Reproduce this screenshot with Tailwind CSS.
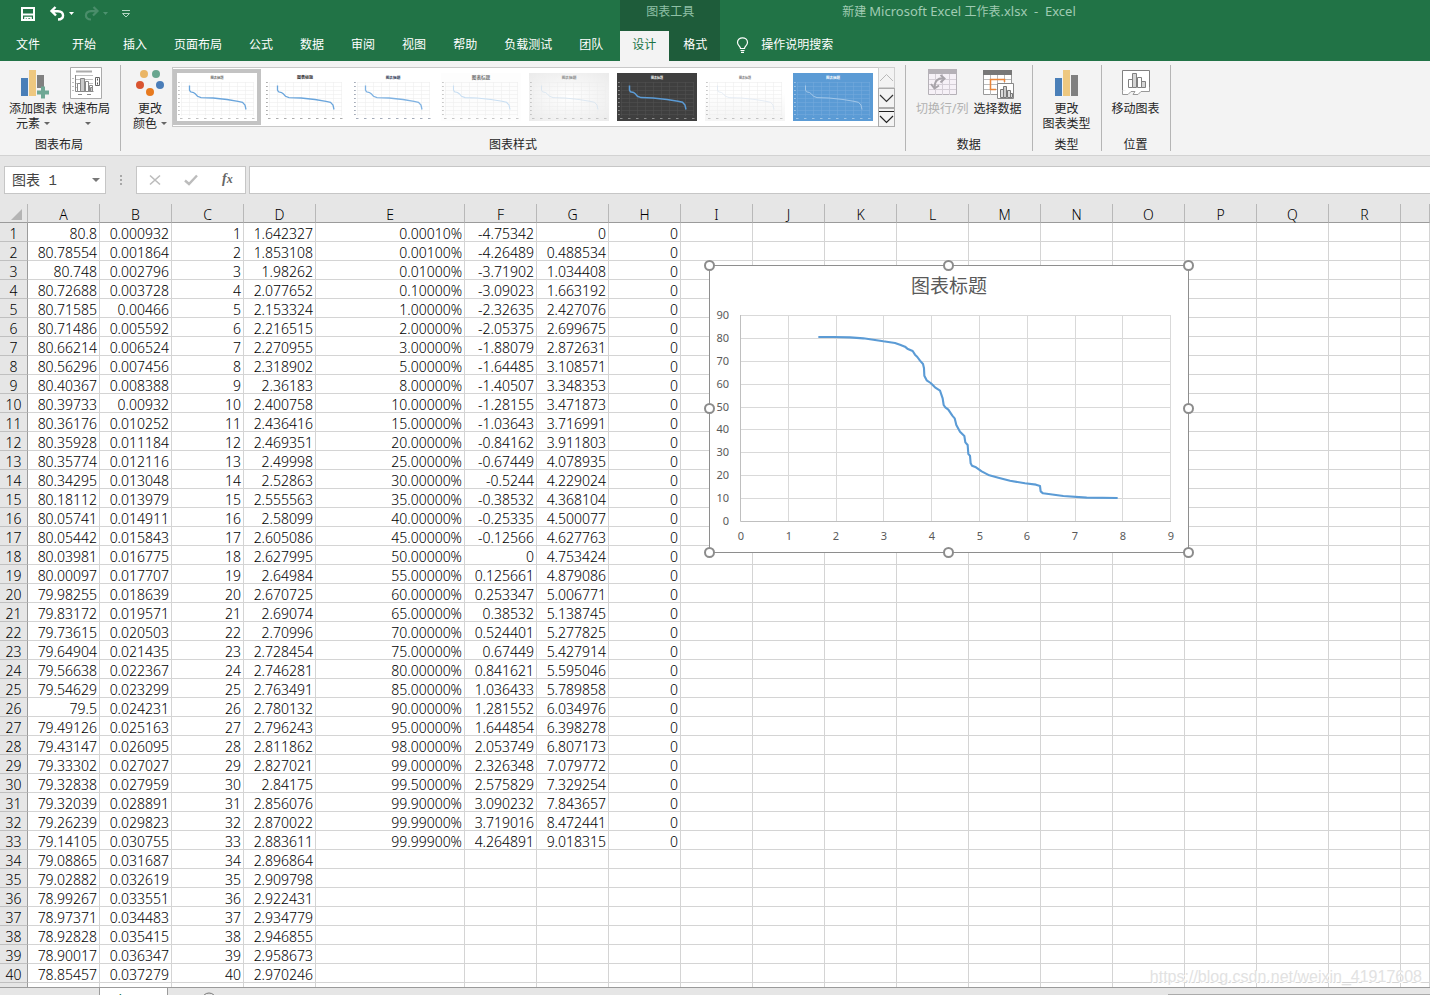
<!DOCTYPE html>
<html lang="zh-CN">
<head>
<meta charset="utf-8">
<title>新建 Microsoft Excel 工作表.xlsx - Excel</title>
<script src="https://cdn.jsdelivr.net/npm/@tailwindcss/browser@4"></script>
</head>
<body class="flex h-screen flex-col overflow-hidden bg-[#e6e6e6] font-['Noto_Sans','Noto_Sans_CJK_SC',sans-serif] text-xs text-[#262626]">

<!-- Title bar and ribbon tabs -->
<header class="flex shrink-0 bg-[#217346] text-white">
  <div class="flex flex-col">
    <div class="flex h-[31px] items-center pb-1 pl-5">
      <button aria-label="保存" class="h-4 w-4"><svg class="h-4 w-4" viewBox="0 0 16 16" fill="none" stroke="#fff" stroke-width="2"><path d="M2 2H14V14H2Z"/><path d="M3 8.500H13"/><path d="M5 14V11.500H11V14M7.500 12V14.500" stroke-width="1.600"/></svg></button>
      <button aria-label="撤消" class="ml-[13px] h-4 w-4"><svg class="h-4 w-4" viewBox="0 0 16 16" fill="none" stroke="#fff" stroke-width="2.400"><path d="M6.500 1L2.500 5L7 9.500M2.500 5.200H9C15.500 5.500 16 13.500 9 13.500"/></svg></button>
      <button aria-label="撤消选项" class="ml-1 h-4 w-2"><svg class="h-4 w-2" viewBox="0 0 8 16"><path d="M0 6H5L2.500 9Z" fill="#fff"/></svg></button>
      <button aria-label="恢复" class="ml-[7px] h-4 w-4"><svg class="h-4 w-4" viewBox="0 0 16 16" fill="none" stroke="#4a8d6a" stroke-width="2.200"><path d="M9.500 1L13.500 5L9 9.500M13.500 5.200H7C0.500 5.500 0 13.500 7 13.500"/></svg></button>
      <button aria-label="恢复选项" class="ml-[3px] h-4 w-2"><svg class="h-4 w-2" viewBox="0 0 8 16"><path d="M0 6H5L2.500 9Z" fill="#4e9270"/></svg></button>
      <button aria-label="自定义快速访问工具栏" class="ml-[10px] h-4 w-3"><svg class="h-4 w-3" viewBox="0 0 12 16" fill="none" stroke="#b5d5c3"><path d="M1 4.500H9"/><path d="M1.500 7.500H8.500L5 11Z"/></svg></button>
    </div>
    <nav aria-label="功能区" class="flex h-[30px] gap-px pb-0.5 pr-1">
      <button class="mr-[5px] pl-4 pr-[13px]">文件</button>
      <button class="px-[13px]">开始</button>
      <button class="px-[13px]">插入</button>
      <button class="px-[13px]">页面布局</button>
      <button class="px-[13px]">公式</button>
      <button class="px-[13px]">数据</button>
      <button class="px-[13px]">审阅</button>
      <button class="px-[13px]">视图</button>
      <button class="px-[13px]">帮助</button>
      <button class="px-[13px]">负载测试</button>
      <button class="px-[13px]">团队</button>
    </nav>
  </div>
  <div class="flex flex-col bg-[#1e5c3a]">
    <div class="flex h-[31px] items-center justify-center pb-2 text-[#8fc0a6]">图表工具</div>
    <div class="flex h-[30px]">
      <button class="bg-[#f3f3f3] pb-0.5 pl-3 pr-[13px] text-[#217346]">设计</button>
      <button class="pb-0.5 pl-[14px] pr-[13px]">格式</button>
    </div>
  </div>
  <div class="flex flex-1 flex-col">
    <div class="flex h-[31px] items-center whitespace-pre pb-2 pl-[122px] text-[#a0cbb3]"><span>新建 <span class="text-[13px]">Microsoft Excel </span>工作表<span class="text-[13px]">.xlsx  -  Excel</span></span></div>
    <button class="flex h-[30px] items-center gap-3 pb-0.5 pl-4 text-left">
      <svg class="h-4 w-[13px]" viewBox="0 0 13 16" fill="none" stroke="#fff" stroke-width="1.200"><path d="M4.500 11.500C4.500 9 1.500 8.500 1.500 5.500C1.500 2.500 4 0.800 6.500 0.800S11.500 2.500 11.500 5.500C11.500 8.500 8.500 9 8.500 11.500Z"/><path d="M4.500 13.500H8.500M5 15.400H8"/></svg>
      操作说明搜索
    </button>
  </div>
</header>

<!-- Ribbon -->
<section aria-label="设计" class="flex h-[95px] shrink-0 border-b border-[#d2d2d2] bg-[#f3f3f3] py-1 leading-[15px]">
  <div class="flex flex-col border-r border-[#b5b5b5] pt-0.5">
    <div class="flex flex-1 items-start gap-[5px] pl-[9px] pr-2.5">
      <button class="flex flex-col items-center">
        <svg class="mb-0.5 h-8 w-8" viewBox="0 0 32 32"><path fill="#4a7fb8" d="M4 11h7v18H4z"/><path fill="#eec880" d="M12 3h7v26h-7z"/><path fill="#808080" d="M20 8h7v13h-7z"/><path fill="#6fa895" d="M24 19.500h4v4h4v4h-4v4h-4v-4h-4v-4h4z"/></svg>
        添加图表
        <span class="flex items-center gap-1">元素<svg class="h-[5px] w-[6px]" viewBox="0 0 6 5"><path d="M0 1H6L3 4Z" fill="#666"/></svg></span>
      </button>
      <button class="flex flex-col items-center">
        <svg class="mb-0.5 h-8 w-8" viewBox="0 0 32 32" fill="none" stroke="#888"><path d="M.5.5h31v31H.5z" fill="#fff" stroke="#ababab"/><path d="M6 4.500h16" stroke="#ababab" stroke-width="2"/><path d="M5 8.500h18M5 12.500h18M5 16.500h18M5 20.500h18M2 11.500h2M2 15.500h2M2 19.500h2M2 23.500h2" stroke="#c0c0c0"/><path d="M5.500 8v16.500h18"/><path d="M7.500 16.500h3v8h-3zM15.500 14.500h3v10h-3zM19.500 18.500h3v6h-3z" fill="#fff"/><path d="M10.500 11.500h4v13h-4zM22.500 20.500h-2v4h2z" fill="#ccc"/><path d="M25.500 10.500h4v8h-4z" stroke="#666"/><path d="M27 12.500h1M27 16.500h1" stroke="#555" stroke-width="2"/><path d="M8 27.500h4M17 27.500h4"/></svg>
        快速布局
        <svg class="my-[5px] ml-1 h-[5px] w-[6px]" viewBox="0 0 6 5"><path d="M0 1H6L3 4Z" fill="#666"/></svg>
      </button>
    </div>
    <div class="pr-0.5 text-center leading-[13px]">图表布局</div>
  </div>

  <div class="flex flex-col border-r border-[#b5b5b5] pt-0.5">
    <div class="flex flex-1 items-start pl-3 pr-2.5">
      <button class="mr-[5px] flex flex-col items-center">
        <svg class="mb-0.5 h-8 w-8" viewBox="0 0 32 32"><circle cx="10" cy="7" r="4" fill="#eab564"/><circle cx="22" cy="7" r="4" fill="#69a68f"/><circle cx="6" cy="18" r="4" fill="#d95430"/><circle cx="26" cy="18" r="4" fill="#4a7db8"/><circle cx="16" cy="25" r="4" fill="#e77a1e"/></svg>
        更改
        <span class="flex items-center gap-1">颜色<svg class="h-[5px] w-[6px]" viewBox="0 0 6 5"><path d="M0 1H6L3 4Z" fill="#666"/></svg></span>
      </button>
      <div id="gallery" class="flex h-[60px] border border-r-0 border-[#c8c8c8] bg-white pr-px pt-px"></div>
      <div class="flex h-[60px] w-[17px] flex-col">
        <button aria-label="上一行" class="h-[21px] border border-[#d0d0d0]"><svg class="m-auto h-3 w-[15px]" viewBox="0 0 15 12" fill="none" stroke="#b8b8b8"><path d="M1 9L7.500 2.500L14 9"/></svg></button>
        <button aria-label="下一行" class="h-5 border border-[#ababab]"><svg class="m-auto h-3 w-[15px]" viewBox="0 0 15 12" fill="none" stroke="#333" stroke-width="1.200"><path d="M1 3L7.500 9.500L14 3"/></svg></button>
        <button aria-label="其他" class="h-[19px] border border-[#ababab]"><svg class="m-auto h-4 w-[15px]" viewBox="0 0 15 16" fill="none" stroke="#222" stroke-width="1.200"><path d="M0 1.500H15M1 6L7.500 12.500L14 6"/></svg></button>
      </div>
    </div>
    <div class="text-center leading-[13px]">图表样式</div>
  </div>

  <div class="flex flex-col border-r border-[#b5b5b5] pt-0.5">
    <div class="flex flex-1 items-start gap-[5px] pl-2.5 pr-2.5">
      <button disabled class="flex flex-col items-center whitespace-nowrap text-[#b1b1b1]">
        <svg class="mb-0.5 h-8 w-8" viewBox="0 0 32 32" fill="none"><path d="M2.500 3.500h28v24h-28z" fill="#f6f1f7" stroke="#b5b1b7"/><path d="M2 2h29v5H2z" fill="#b5b1b7"/><path d="M9.500 7v21M16.500 7v21M23.500 7v21M3 12.500h27M3 17.500h27M3 22.500h27" stroke="#d5cfd7"/><path d="M8.500 21C8.500 14 12 10.500 18 11.500M14.500 8L18.500 11.500L14.500 15.500M5 17L8.500 21.500L13 18.500" stroke="#a8a4aa" stroke-width="2"/></svg>
        切换行/列
      </button>
      <button class="flex flex-col items-center">
        <svg class="mb-0.5 h-8 w-8" viewBox="0 0 32 32" fill="none"><path d="M1.500 3.500h28v24h-28z" fill="#fff" stroke="#999"/><path d="M1 3h29v5H1z" fill="#777"/><path d="M8.500 8v20M15.500 8v20M22.500 8v20M2 12.500h27M2 17.500h27M2 22.500h27" stroke="#bbb"/><path d="M14 22.500H8.500V12.500H22.500V15" stroke="#e8853a" stroke-width="1.500"/><path d="M15.500 16.500h16v15h-16z" fill="#fff" stroke="#888"/><path d="M18.500 22.500h3v8h-3zM25.500 23.500h3v7h-3zM28.500 26.500h2v4h-2z" fill="#ddd" stroke="#777"/><path d="M21.500 19.500h3v11h-3z" fill="#ccc" stroke="#777"/></svg>
        选择数据
      </button>
    </div>
    <div class="text-center leading-[13px]">数据</div>
  </div>

  <div class="flex flex-col border-r border-[#b5b5b5] pt-0.5">
    <div class="flex flex-1 items-start px-2.5">
      <button class="flex flex-col items-center">
        <svg class="mb-0.5 h-8 w-8" viewBox="0 0 32 32"><path fill="#4a7fb8" d="M4 11h7v18H4z"/><path fill="#eec880" d="M12 3h7v26h-7z"/><path fill="#808080" d="M20 8h7v21h-7z"/></svg>
        更改
        <span>图表类型</span>
      </button>
    </div>
    <div class="text-center leading-[13px]">类型</div>
  </div>

  <div class="flex flex-col border-r border-[#b5b5b5] pt-0.5">
    <div class="flex flex-1 items-start px-2.5">
      <button class="flex flex-col items-center">
        <svg class="mb-0.5 h-8 w-8" viewBox="0 0 32 32" fill="#fff" stroke="#808080"><path d="M2.500 3.500h27v20h-27z"/><path d="M2.500 23.500V27.500L8 27.500L11 24.500H15L13 27.500H18L21 24.500H29.500V20" stroke="#999"/><path d="M3 21h26v2.500H3z" stroke="none"/><path d="M8.500 12.500h4v8h-4zM17.500 10.500h4v10h-4z"/><path d="M12.500 6.500h4v14h-4zM21.500 14.500h4v6h-4z" fill="#d4d4d4"/></svg>
        移动图表
      </button>
    </div>
    <div class="text-center leading-[13px]">位置</div>
  </div>
</section>

<!-- Name box and formula bar -->
<div class="flex h-12 shrink-0 items-start pl-1 pt-2.5">
  <div class="flex h-7 w-[102px] border border-[#c6c6c6] bg-white">
    <input aria-label="名称框" value="图表 1" class="w-20 min-w-0 bg-transparent pl-[7px] pt-0.5 font-['Liberation_Mono','Noto_Sans_CJK_SC',monospace] text-sm text-[#444] outline-none">
    <button aria-label="名称列表" class="h-full flex-1"><svg class="ml-[7px] h-2 w-2" viewBox="0 0 8 8"><path d="M0 2H8L4 6Z" fill="#777"/></svg></button>
  </div>
  <svg class="h-7 w-[30px]" viewBox="0 0 30 28" fill="#a8a8a8"><path d="M14 9h2v2h-2zM14 13h2v2h-2zM14 17h2v2h-2z"/></svg>
  <div class="flex h-7 w-[110px] items-center border border-[#c6c6c6] bg-white pl-2.5">
    <button aria-label="取消" class="h-4 w-4"><svg class="h-4 w-4" viewBox="0 0 16 16" fill="none" stroke="#bcbcbc" stroke-width="1.600"><path d="M3 3.500L13 12.500M13 3.500L3 12.500"/></svg></button>
    <button aria-label="输入" class="ml-5 h-4 w-4"><svg class="h-4 w-4" viewBox="0 0 16 16" fill="none" stroke="#bcbcbc" stroke-width="2.400"><path d="M2 8.500L6 12L14 3.500"/></svg></button>
    <button aria-label="插入函数" class="ml-[23px] pb-0.5 font-['Liberation_Serif',serif] text-sm font-bold italic leading-4 text-[#666]">f<span class="text-xs">x</span></button>
  </div>
  <input aria-label="编辑栏" class="ml-[3px] h-7 min-w-0 flex-1 border border-r-0 border-[#c6c6c6] bg-white px-2 outline-none">
</div>

<!-- Worksheet -->
<main class="relative min-h-0 flex-1 overflow-hidden">
  <table class="w-full table-fixed border-separate border-spacing-0 bg-white text-sm font-light leading-[14px] text-black">
    <colgroup>
      <col class="w-7"><col class="w-[72px]"><col class="w-[72px]"><col class="w-[72px]"><col class="w-[72px]"><col class="w-[149px]">
      <col class="w-[72px]"><col class="w-[72px]"><col class="w-[72px]"><col class="w-[72px]"><col class="w-[72px]"><col class="w-[72px]">
      <col class="w-[72px]"><col class="w-[72px]"><col class="w-[72px]"><col class="w-[72px]"><col class="w-[72px]"><col class="w-[72px]"><col class="w-[72px]"><col>
    </colgroup>
    <thead><tr id="heads"></tr></thead>
    <tbody id="rows"></tbody>
  </table>

  <figure aria-label="图表标题" class="absolute left-[709px] top-[61px] h-[288px] w-[480px]">
    <svg class="h-full w-full overflow-visible font-['Noto_Sans','Noto_Sans_CJK_SC',sans-serif]" viewBox="0 0 480 288">
      <rect x=".5" y=".5" width="479" height="287" fill="#fff" stroke="#8e8e8e"/>
      <text x="240" y="28" text-anchor="middle" fill="#595959" class="text-[19px]">图表标题</text>
      <path id="grid" d="M31 50.500H462M31 73.500H462M31 96.500H462M31 119.500H462M31 142.500H462M31 164.500H462M31 187.500H462M31 210.500H462M31 233.500H462M79.500 50V256M127.500 50V256M174.500 50V256M222.500 50V256M270.500 50V256M318.500 50V256M366.500 50V256M413.500 50V256M461.500 50V256" stroke="#d9d9d9" fill="none"/>
      <path d="M31.500 50V256.500H462" stroke="#bfbfbf" fill="none"/>
      <g id="yAxis" fill="#595959" text-anchor="end" class="text-[11px]"></g>
      <g id="xAxis" fill="#595959" text-anchor="middle" class="text-[11px]"></g>
      <path transform="translate(-9 -10) scale(.33333)" fill="none" stroke="#5b9bd5" stroke-width="6.300" stroke-linejoin="round" d="M355 246H400L450 247L490 250L520 254L550 259L585 264L600 269L615 275L622 281L638 288L645 299L652 306L660 317L669 327L672 340L673 362L680 376L692 384L705 397L720 407L728 430L731 450L736 457L745 464L757 482L764 490L769 510L780 530L793 543L796 562L803 570L805 597L810 602L812 625L816 632L828 637L845 649L868 661L895 668L930 677L975 685L1008 689L1020 693L1022 709L1029 715L1090 723L1160 728L1253 729"/>
      <g fill="#fff" stroke="#8c8c8c" stroke-width="2"><circle cx=".5" cy=".5" r="4.500"/><circle cx="239.500" cy=".5" r="4.500"/><circle cx="479.500" cy=".5" r="4.500"/><circle cx=".5" cy="143.500" r="4.500"/><circle cx="479.500" cy="143.500" r="4.500"/><circle cx=".5" cy="287.500" r="4.500"/><circle cx="239.500" cy="287.500" r="4.500"/><circle cx="479.500" cy="287.500" r="4.500"/></g>
    </svg>
  </figure>
  <div class="absolute bottom-0 right-2 font-['Liberation_Sans',sans-serif] text-base leading-5 text-[#e2e2e2] [text-shadow:1px_1px_0_#fff]">https://blog.csdn.net/weixin_41917608</div>
</main>

<!-- Sheet tabs -->
<footer class="flex h-2 shrink-0 overflow-hidden border-t border-[#9b9b9b]">
  <button class="-mt-px ml-[99px] h-6 w-[69px] shrink-0 border-x border-[#9b9b9b] bg-white pt-0.5 text-sm leading-5 text-[#217346]">Sheet1</button>
  <button aria-label="新工作表" class="ml-8 mt-1 h-4 w-[18px] shrink-0"><svg class="h-4 w-[18px]" viewBox="0 0 18 16" fill="none" stroke="#777"><circle cx="9" cy="8" r="7"/><path d="M9 4.500V11.500M5.500 8H12.500"/></svg></button>
  <div class="ml-auto mt-1.5 h-4 w-[262px] border-t border-[#ababab] bg-[#e6e6e6]"></div>
</footer>

<script>
const A = "80.8 80.78554 80.748 80.72688 80.71585 80.71486 80.66214 80.56296 80.40367 80.39733 80.36176 80.35928 80.35774 80.34295 80.18112 80.05741 80.05442 80.03981 80.00097 79.98255 79.83172 79.73615 79.64904 79.56638 79.54629 79.5 79.49126 79.43147 79.33302 79.32838 79.32039 79.26239 79.14105 79.08865 79.02882 78.99267 78.97371 78.92828 78.90017 78.85457".split(" ");
const B = "0.000932 0.001864 0.002796 0.003728 0.00466 0.005592 0.006524 0.007456 0.008388 0.00932 0.010252 0.011184 0.012116 0.013048 0.013979 0.014911 0.015843 0.016775 0.017707 0.018639 0.019571 0.020503 0.021435 0.022367 0.023299 0.024231 0.025163 0.026095 0.027027 0.027959 0.028891 0.029823 0.030755 0.031687 0.032619 0.033551 0.034483 0.035415 0.036347 0.037279".split(" ");
const D = "1.642327 1.853108 1.98262 2.077652 2.153324 2.216515 2.270955 2.318902 2.36183 2.400758 2.436416 2.469351 2.49998 2.52863 2.555563 2.58099 2.605086 2.627995 2.64984 2.670725 2.69074 2.70996 2.728454 2.746281 2.763491 2.780132 2.796243 2.811862 2.827021 2.84175 2.856076 2.870022 2.883611 2.896864 2.909798 2.922431 2.934779 2.946855 2.958673 2.970246".split(" ");
const E = "0.00010% 0.00100% 0.01000% 0.10000% 1.00000% 2.00000% 3.00000% 5.00000% 8.00000% 10.00000% 15.00000% 20.00000% 25.00000% 30.00000% 35.00000% 40.00000% 45.00000% 50.00000% 55.00000% 60.00000% 65.00000% 70.00000% 75.00000% 80.00000% 85.00000% 90.00000% 95.00000% 98.00000% 99.00000% 99.50000% 99.90000% 99.99000% 99.99900%".split(" ");
const F = "-4.75342 -4.26489 -3.71902 -3.09023 -2.32635 -2.05375 -1.88079 -1.64485 -1.40507 -1.28155 -1.03643 -0.84162 -0.67449 -0.5244 -0.38532 -0.25335 -0.12566 0 0.125661 0.253347 0.38532 0.524401 0.67449 0.841621 1.036433 1.281552 1.644854 2.053749 2.326348 2.575829 3.090232 3.719016 4.264891".split(" ");
const G = "0 0.488534 1.034408 1.663192 2.427076 2.699675 2.872631 3.108571 3.348353 3.471873 3.716991 3.911803 4.078935 4.229024 4.368104 4.500077 4.627763 4.753424 4.879086 5.006771 5.138745 5.277825 5.427914 5.595046 5.789858 6.034976 6.398278 6.807173 7.079772 7.329254 7.843657 8.472441 9.018315".split(" ");

const headClass = "h-[19px] border-b border-r border-b-[#9b9b9b] border-r-[#b8b8b8] bg-[#e6e6e6] p-0 pt-1 text-center font-light";
const letters = [..."ABCDEFGHIJKLMNOPQR", ""];
document.getElementById("heads").innerHTML =
  `<th class="${headClass}"><svg class="ml-auto mr-1 h-3 w-3" viewBox="0 0 12 12" aria-hidden="true"><path d="M11 0V11H0Z" fill="#b4b4b4"/></svg></th>` +
  letters.map(l => `<th scope="col" class="${headClass}">${l}</th>`).join("");

let html = "";
for (let i = 0; i < 41; i++) {
  const filled = i < 40, stats = i < 33;
  const cells = letters.map((l, c) => {
    const v = [A[i], B[i], filled ? i + 1 : "", D[i], E[i], F[i], G[i], stats ? 0 : ""][c];
    return `<td class="h-[19px] border-b border-r border-[#d4d4d4] p-0 pr-0.5 pt-1 text-right">${v ?? ""}</td>`;
  }).join("");
  html += `<tr><th scope="row" class="h-[19px] border-b border-r border-b-[#c0c0c0] border-r-[#9b9b9b] bg-[#e6e6e6] p-0 pt-1 text-center font-light">${filled ? i + 1 : ""}</th>${cells}</tr>`;
}
document.getElementById("rows").innerHTML = html;

/* Chart axis labels */
const ys = [256, 233, 210, 187, 164, 142, 119, 96, 73, 50];
document.getElementById("yAxis").innerHTML = ys.map((y, i) => `<text x="20" y="${y + 4}">${i * 10}</text>`).join("");
const xs = [32, 80, 127, 175, 223, 271, 318, 366, 414, 462];
document.getElementById("xAxis").innerHTML = xs.map((x, i) => `<text x="${x}" y="275">${i}</text>`).join("");

/* Chart style gallery: background, grid, line, text, line width, title size */
const styles = [
  ["#ffffff", "#eeeeee", "#6aa5dc", "#666666", 1.3, 3.300],
  ["#ffffff", "#eeeeee", "#6aa5dc", "#333333", 1.3, 4],
  ["#ffffff", "#eeeeee", "#7fb2e2", "#1f3050", 1.3, 3.700],
  ["#fdfdfd", "#eeeeee", "#c9dff3", "#777777", 1.1, 4.600],
  ["url(#pale)", "#eeeeee", "#d5e3f0", "#888888", 0.8, 3.700],
  ["#3f3f3f", "#505050", "#5b9bd5", "#ffffff", 1.5, 3],
  ["url(#fade)", "#eeeeee", "#dfe8f3", "#777777", 0.8, 3],
  ["#5b9bd5", "#74aadc", "#a9cbea", "#ffffff", 0.9, 3.500]
];
let grid = "";
for (let x = 4; x < 80; x += 8) grid += `M${x}.500 9V43`;
for (let y = 9; y < 44; y += 4) grid += `M4 ${y}.500H77`;
document.getElementById("gallery").innerHTML = styles.map(([bg, g, line, ink, w, size], i) => {
  let ticks = "";
  for (let x = 3; x < 80; x += 8) ticks += `M${x} 45.500h2.500`;
  for (let y = 9; y < 44; y += 4) ticks += `M1 ${y}.500h1.800`;
  return `<button aria-label="样式 ${i + 1}" class="${i ? "h-14 w-[88px] border-4 border-white" : "h-14 w-[88px] border-4 border-[#c3c3c3]"}"><svg class="h-12 w-20" viewBox="0 0 80 48">
  <defs><radialGradient id="pale" r=".8"><stop offset="0" stop-color="#fff"/><stop offset="1" stop-color="#e8e8e8"/></radialGradient><linearGradient id="fade" x2="0" y2="1"><stop offset=".4" stop-color="#fff"/><stop offset="1" stop-color="#f4f4f4"/></linearGradient></defs>
  <rect width="80" height="48" fill="${bg}"/><path d="${grid}" stroke="${g}" stroke-width=".6"/><path d="${ticks}" stroke="${ink}" stroke-opacity=".4" stroke-width="1"/>
  <text x="40" y="5.500" text-anchor="middle" font-size="${size}" font-weight="bold" fill="${ink}">图表标题</text>
  <path d="M12.500 12.500V17L13.500 18.800L16.500 19.500L18.500 21L20.500 23.300L24 24.600L36 25L50 26.500L61 28.300L65.500 29.300L68 32L69 36.500" fill="none" stroke="${line}" stroke-width="${w}"/></svg></button>`;
}).join("");
</script>
</body>
</html>
